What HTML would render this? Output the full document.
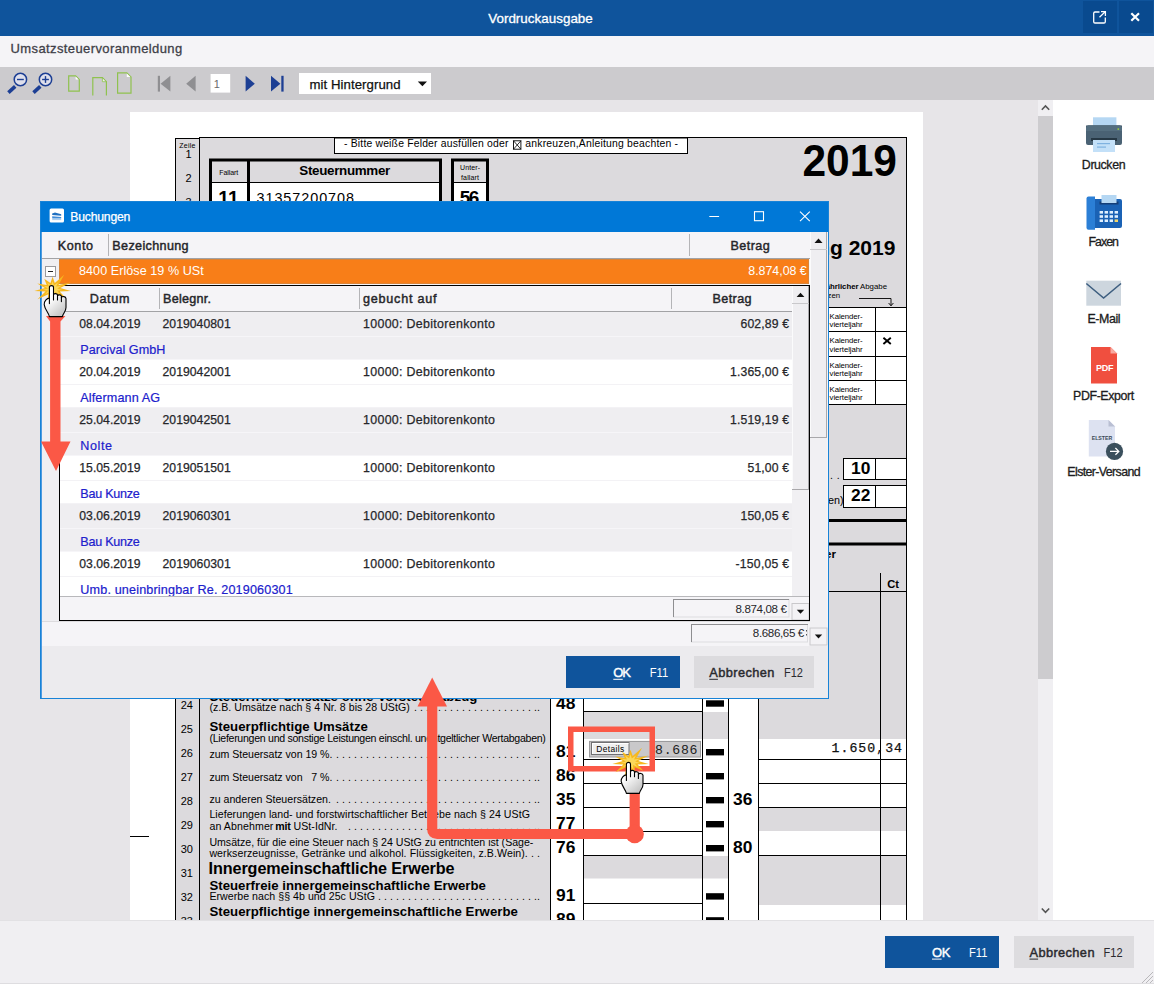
<!DOCTYPE html>
<html lang="de"><head><meta charset="utf-8"><title>Vordruckausgabe</title>
<style>
html,body{margin:0;padding:0;background:#e7e5e8;}
body{width:1154px;height:984px;overflow:hidden;}
svg{display:block;font-family:"Liberation Sans",sans-serif;}
svg text{white-space:pre;}
.mono{font-family:"Liberation Mono",monospace;}
</style></head><body>
<svg width="1154" height="984" viewBox="0 0 1154 984">
<rect x="0" y="0" width="1154" height="984" fill="#e7e5e8"/>
<rect x="0" y="0" width="1154" height="36" fill="#0f549c"/>
<rect x="1083" y="1" width="34" height="32" fill="#094a8f"/>
<rect x="1119" y="1" width="34" height="32" fill="#094a8f"/>
<text x="540.5" y="23" font-size="13.4" fill="#fff" text-anchor="middle" textLength="104.6" stroke="#fff" stroke-width="0.3">Vordruckausgabe</text>
<path d="M1099.5 12 H1095 Q1093.7 12 1093.7 13.3 V21.7 Q1093.7 23 1095 23 H1104 Q1105.3 23 1105.3 21.7 V17.5" fill="none" stroke="#fff" stroke-width="1.3"/>
<path d="M1099.5 17.3 L1105.3 11.6 M1101 11.6 H1105.4 V16" fill="none" stroke="#fff" stroke-width="1.3"/>
<path d="M1131.3 13.3 L1139 20.7 M1139 13.3 L1131.3 20.7" fill="none" stroke="#fff" stroke-width="2.2"/>
<rect x="0" y="36" width="1154" height="31" fill="#f5f4f7"/>
<text x="10.5" y="53.3" font-size="13" fill="#3f3f48" textLength="171.7" stroke="#3f3f48" stroke-width="0.3">Umsatzsteuervoranmeldung</text>
<rect x="0" y="67" width="1154" height="33" fill="#cccbce"/>
<circle cx="20.4" cy="79.5" r="6.2" fill="#dfe0ec" stroke="#1d3f94" stroke-width="1.5"/>
<line x1="15.2" y1="86.4" x2="8.4" y2="92.6" stroke="#1d3f94" stroke-width="3.6"/>
<line x1="17" y1="79.5" x2="23.8" y2="79.5" stroke="#1d3f94" stroke-width="1.4"/>
<circle cx="45.5" cy="79.5" r="6.2" fill="#dfe0ec" stroke="#1d3f94" stroke-width="1.5"/>
<line x1="40.3" y1="86.4" x2="33.5" y2="92.6" stroke="#1d3f94" stroke-width="3.6"/>
<line x1="42.1" y1="79.5" x2="48.9" y2="79.5" stroke="#1d3f94" stroke-width="1.4"/>
<line x1="45.5" y1="76.1" x2="45.5" y2="82.9" stroke="#1d3f94" stroke-width="1.4"/>
<path d="M68.7 75.8 H75.6 L79.3 79.5 V91.2 H68.7 Z" fill="none" stroke="#8fc24f" stroke-width="1.2"/>
<polygon points="75.6,76.4 75.6,79.5 78.7,79.5" fill="#fff"/>
<path d="M92.8 95.5 V77.7 H102.4 L106.4 81.7 V95.5" fill="none" stroke="#8fc24f" stroke-width="1.2"/>
<polygon points="102.4,78.3 102.4,81.7 105.8,81.7" fill="#eef5e4"/>
<path d="M102.4 77.7 V81.7 H106.4" fill="none" stroke="#8fc24f" stroke-width="0.8"/>
<path d="M117.6 72.8 H126.8 L131 77 V93.2 H117.6 Z" fill="none" stroke="#8fc24f" stroke-width="1.2"/>
<polygon points="126.8,73.4 126.8,77 130.4,77" fill="#fff"/>
<rect x="157.8" y="75.8" width="2.2" height="15.8" fill="#8f8f92"/>
<polygon points="170.4,75.8 170.4,91.6 160.6,83.7" fill="#8f8f92"/>
<polygon points="195.6,75.8 195.6,91.6 186.2,83.7" fill="#8f8f92"/>
<rect x="210.6" y="74" width="19.6" height="18.6" fill="#fff"/>
<text x="213.8" y="87.6" font-size="11" fill="#6a6a6a">1</text>
<polygon points="245.6,75.8 245.6,91.6 254.8,83.7" fill="#1d3f94"/>
<polygon points="271,75.8 271,91.6 280.4,83.7" fill="#1d3f94"/>
<rect x="281.3" y="75.8" width="2.3" height="15.8" fill="#1d3f94"/>
<rect x="299" y="73" width="132" height="21" fill="#fff"/>
<text x="309.4" y="88.9" font-size="13.2" fill="#111" textLength="91.2" stroke="#111" stroke-width="0.25">mit Hintergrund</text>
<polygon points="417.8,81.4 427,81.4 422.4,86.2" fill="#111"/>
<rect x="1053" y="100" width="101" height="820" fill="#fff"/>
<rect x="1038" y="100" width="15" height="820" fill="#f0eff2"/>
<rect x="1038" y="116" width="15" height="563" fill="#cdcccf"/>
<path d="M1041.8 109.8 L1045.5 106 L1049.2 109.8" fill="none" stroke="#555" stroke-width="1.6"/>
<path d="M1041.8 908.5 L1045.5 912.3 L1049.2 908.5" fill="none" stroke="#555" stroke-width="1.6"/>
<rect x="1093" y="117.3" width="23.4" height="10" fill="#b5d7f3"/>
<path d="M1088.5 125.5 H1119.5 Q1122 125.5 1122 128 V143 Q1122 145 1120 145 H1088 Q1086 145 1086 143 V128 Q1086 125.5 1088.5 125.5 Z" fill="#4a6274"/>
<rect x="1086" y="125.5" width="36" height="5.5" fill="#3f5566"/>
<path d="M1088.5 125.5 H1119.5 Q1122 125.5 1122 128 V131 H1086 V128 Q1086 125.5 1088.5 125.5 Z" fill="#546e7f"/>
<rect x="1091" y="138" width="26" height="3" fill="#263845"/>
<rect x="1093" y="140" width="22" height="12" fill="#c3e0f8"/>
<rect x="1097" y="143" width="13" height="1.2" fill="#7fb2e0"/>
<rect x="1097" y="146.5" width="9" height="1.2" fill="#7fb2e0"/>
<rect x="1117.5" y="128.3" width="1.6" height="1.6" fill="#9ccc3c"/>
<text x="1103.7" y="168.7" font-size="12.4" fill="#1c1c20" text-anchor="middle" textLength="43.7" stroke="#1c1c20" stroke-width="0.3">Drucken</text>
<path d="M1088.5 196.5 H1095 V229.7 H1088.5 Q1086.5 229.7 1086.5 227.7 V198.5 Q1086.5 196.5 1088.5 196.5 Z" fill="#2b7fd6"/>
<rect x="1101.5" y="195" width="15" height="8" fill="#b5d7f3"/>
<path d="M1095 199 H1120 Q1122 199 1122 201 V226 Q1122 228 1120 228 H1095 Z" fill="#1a62b5"/>
<rect x="1099.5" y="201.5" width="19" height="3" fill="#143e78"/>
<rect x="1101.5" y="199" width="15" height="4" fill="#b5d7f3"/>
<rect x="1099.6" y="211" width="3.4" height="2.6" fill="#dff0ff"/>
<rect x="1104.6" y="211" width="3.4" height="2.6" fill="#dff0ff"/>
<rect x="1109.6" y="211" width="3.4" height="2.6" fill="#dff0ff"/>
<rect x="1114.6" y="211" width="3.4" height="2.6" fill="#dff0ff"/>
<rect x="1099.6" y="215.2" width="3.4" height="2.6" fill="#dff0ff"/>
<rect x="1104.6" y="215.2" width="3.4" height="2.6" fill="#dff0ff"/>
<rect x="1109.6" y="215.2" width="3.4" height="2.6" fill="#dff0ff"/>
<rect x="1114.6" y="215.2" width="3.4" height="2.6" fill="#dff0ff"/>
<rect x="1099.6" y="219.4" width="3.4" height="2.6" fill="#dff0ff"/>
<rect x="1104.6" y="219.4" width="3.4" height="2.6" fill="#dff0ff"/>
<rect x="1109.6" y="219.4" width="3.4" height="2.6" fill="#dff0ff"/>
<rect x="1114.6" y="219.4" width="3.4" height="2.6" fill="#f5d76a"/>
<text x="1103.7" y="246" font-size="12.4" fill="#1c1c20" text-anchor="middle" textLength="30.5" stroke="#1c1c20" stroke-width="0.3">Faxen</text>
<rect x="1086.3" y="280.7" width="34.7" height="25" fill="#cdd6de"/>
<path d="M1086.3 283.5 L1103.6 298 L1121 283.5" fill="none" stroke="#3e5f80" stroke-width="1.6"/>
<text x="1104" y="323" font-size="12.4" fill="#1c1c20" text-anchor="middle" textLength="33" stroke="#1c1c20" stroke-width="0.3">E-Mail</text>
<path d="M1091 347 H1110.5 L1117 353.5 V383.5 H1091 Z" fill="#f04f3f"/>
<path d="M1110.5 347 L1117 353.5 H1110.5 Z" fill="#f9aaa0"/>
<text x="1104.7" y="370.6" font-size="9" fill="#fff" font-weight="bold" text-anchor="middle" textLength="17.4">PDF</text>
<text x="1103.6" y="399.6" font-size="12.4" fill="#1c1c20" text-anchor="middle" textLength="61" stroke="#1c1c20" stroke-width="0.3">PDF-Export</text>
<path d="M1088.8 420 H1108.5 L1115 426.5 V456.5 H1088.8 Z" fill="#dde2f1"/>
<path d="M1108.5 420 L1115 426.5 H1108.5 Z" fill="#b9bfd3"/>
<text x="1102" y="440.2" font-size="6" fill="#3a4b58" font-weight="bold" text-anchor="middle" textLength="20.6" lengthAdjust="spacingAndGlyphs">ELSTER</text>
<circle cx="1114.5" cy="451.4" r="8.6" fill="#3b505d"/>
<path d="M1110 451.4 H1118.6 M1115.4 448 L1118.8 451.4 L1115.4 454.8" fill="none" stroke="#fff" stroke-width="1.3"/>
<text x="1104" y="476" font-size="12.4" fill="#1c1c20" text-anchor="middle" textLength="73.3" stroke="#1c1c20" stroke-width="0.3">Elster-Versand</text>
<rect x="130" y="112" width="793" height="808" fill="#fff"/>
<rect x="175" y="138" width="732" height="782" fill="#dcdadd"/>
<rect x="130" y="836" width="19" height="1" fill="#000"/>
<rect x="175" y="138" width="25" height="1" fill="#000"/>
<rect x="199" y="137" width="708" height="1" fill="#000"/>
<rect x="175" y="138" width="1" height="782" fill="#000"/>
<rect x="199" y="137" width="1" height="783" fill="#000"/>
<rect x="906" y="137" width="1" height="783" fill="#000"/>
<text x="187.3" y="147.6" font-size="7" fill="#000" text-anchor="middle" textLength="16">Zeile</text>
<text x="188.5" y="158.4" font-size="11" fill="#000" text-anchor="middle">1</text>
<text x="188.5" y="182.2" font-size="11" fill="#000" text-anchor="middle">2</text>
<text x="188.5" y="206.2" font-size="11" fill="#000" text-anchor="middle">3</text>
<rect x="334.5" y="138" width="353" height="15.5" fill="#fff" stroke="#000" stroke-width="1"/>
<text x="344" y="147.3" font-size="10.4" fill="#000" textLength="164.4">- Bitte weiße Felder ausfüllen oder</text>
<rect x="513.5" y="140.8" width="7.4" height="8.4" fill="#fff" stroke="#000" stroke-width="0.9"/>
<path d="M513.5 140.8 L520.9 149.2 M520.9 140.8 L513.5 149.2" fill="none" stroke="#000" stroke-width="0.8"/>
<text x="525.3" y="147.3" font-size="10.4" fill="#000" textLength="152.7">ankreuzen,Anleitung beachten -</text>
<rect x="210.5" y="160" width="230" height="60" fill="#fff"/>
<rect x="210.5" y="160" width="230" height="22.5" fill="#dcdadd"/>
<rect x="210.5" y="160" width="230" height="60" fill="none" stroke="#000" stroke-width="3"/>
<rect x="247" y="160" width="3" height="60" fill="#000"/>
<rect x="210" y="182" width="231" height="1" fill="#000"/>
<text x="228.8" y="175" font-size="7" fill="#000" text-anchor="middle" textLength="19">Fallart</text>
<text x="344.8" y="175.4" font-size="13.4" fill="#000" font-weight="bold" text-anchor="middle" textLength="91">Steuernummer</text>
<text x="218.2" y="204.5" font-size="19.4" fill="#000" font-weight="bold">11</text>
<text x="256.5" y="203.2" font-size="14.4" fill="#000" textLength="97.5">31357200708</text>
<rect x="452.5" y="160" width="35" height="60" fill="#fff"/>
<rect x="452.5" y="160" width="35" height="22.5" fill="#dcdadd"/>
<rect x="452.5" y="160" width="35" height="60" fill="none" stroke="#000" stroke-width="3"/>
<rect x="452" y="182" width="36" height="1" fill="#000"/>
<text x="470" y="170.3" font-size="7" fill="#000" text-anchor="middle" textLength="20">Unter-</text>
<text x="470" y="180.3" font-size="7" fill="#000" text-anchor="middle" textLength="18">fallart</text>
<text x="469.6" y="203.5" font-size="19" fill="#000" font-weight="bold" text-anchor="middle" textLength="19.5">56</text>
<text x="802.4" y="176.2" font-size="44.5" fill="#000" font-weight="bold" textLength="94.6" lengthAdjust="spacingAndGlyphs">2019</text>
<text x="895.4" y="255" font-size="21" fill="#000" font-weight="bold" text-anchor="end">Umsatzsteuer-Voranmeldung 2019</text>
<text x="858.6" y="289" font-size="7.8" fill="#000" font-weight="bold" text-anchor="end">bei vierteljährlicher</text>
<text x="860" y="289" font-size="7.8" fill="#000" textLength="27">Abgabe</text>
<text x="840.2" y="298" font-size="7.8" fill="#000" text-anchor="end">bitte ankreuzen</text>
<path d="M859 298.5 H891 V305.6 M888.6 303 L891 305.8 L893.4 303" fill="none" stroke="#000" stroke-width="0.9"/>
<rect x="780" y="307.5" width="126" height="97" fill="#fff"/>
<rect x="780" y="307" width="126" height="1" fill="#000"/>
<rect x="780" y="331" width="126" height="1" fill="#000"/>
<rect x="780" y="356" width="126" height="1" fill="#000"/>
<rect x="780" y="380" width="126" height="1" fill="#000"/>
<rect x="780" y="404" width="126" height="1" fill="#000"/>
<rect x="875" y="307" width="1" height="98" fill="#000"/>
<text x="829.6" y="319.1" font-size="7.8" fill="#000" textLength="33">Kalender-</text>
<text x="829.6" y="327.4" font-size="7.8" fill="#000" textLength="33">vierteljahr</text>
<text x="829.6" y="343.3" font-size="7.8" fill="#000" textLength="33">Kalender-</text>
<text x="829.6" y="351.6" font-size="7.8" fill="#000" textLength="33">vierteljahr</text>
<text x="829.6" y="367.8" font-size="7.8" fill="#000" textLength="33">Kalender-</text>
<text x="829.6" y="376.1" font-size="7.8" fill="#000" textLength="33">vierteljahr</text>
<text x="829.6" y="392" font-size="7.8" fill="#000" textLength="33">Kalender-</text>
<text x="829.6" y="400.3" font-size="7.8" fill="#000" textLength="33">vierteljahr</text>
<path d="M883.4 337.8 L890.8 344 M890.8 337.8 L883.4 344" fill="none" stroke="#000" stroke-width="1.9"/>
<rect x="843.5" y="458.5" width="63" height="21" fill="#fff" stroke="#000" stroke-width="1"/>
<rect x="875" y="458" width="1" height="22" fill="#000"/>
<text x="860.7" y="474.4" font-size="17.4" fill="#000" font-weight="bold" text-anchor="middle" textLength="19.6">10</text>
<text x="830" y="478.8" font-size="10.5" fill="#000" textLength="9.6">. .</text>
<rect x="843.5" y="485.5" width="63" height="22" fill="#fff" stroke="#000" stroke-width="1"/>
<rect x="875" y="485" width="1" height="23" fill="#000"/>
<text x="860.7" y="501.2" font-size="17.4" fill="#000" font-weight="bold" text-anchor="middle" textLength="19.6">22</text>
<text x="843.6" y="504.4" font-size="10.8" fill="#000" text-anchor="end">(falls vorhanden)</text>
<rect x="200" y="519" width="706" height="3" fill="#000"/>
<rect x="200" y="542.5" width="706" height="3" fill="#000"/>
<text x="836" y="558" font-size="11.5" fill="#000" font-weight="bold" text-anchor="end">Steuer</text>
<text x="887.2" y="588.3" font-size="11.2" fill="#000" font-weight="bold" textLength="11.8">Ct</text>
<rect x="880" y="573" width="1" height="347" fill="#000"/>
<rect x="551" y="591" width="355" height="1" fill="#000"/>
<rect x="551" y="592" width="207" height="328" fill="#fff"/>
<rect x="759" y="592" width="147" height="328" fill="#dcdadd"/>
<rect x="584" y="712" width="144" height="27" fill="#dcdadd"/>
<rect x="584" y="856" width="144" height="22.5" fill="#dcdadd"/>
<rect x="759" y="739" width="147" height="69" fill="#fff"/>
<rect x="759" y="831" width="147" height="25" fill="#fff"/>
<rect x="759" y="905" width="147" height="15" fill="#fff"/>
<rect x="550" y="592" width="1" height="328" fill="#000"/>
<rect x="583" y="592" width="1" height="328" fill="#000"/>
<rect x="702" y="592" width="1" height="328" fill="#000"/>
<rect x="728" y="592" width="1" height="328" fill="#000"/>
<rect x="758" y="592" width="1" height="328" fill="#000"/>
<rect x="880" y="573" width="1" height="347" fill="#000"/>
<rect x="584" y="711" width="118" height="1" fill="#000"/>
<rect x="584" y="759" width="118" height="1" fill="#000"/>
<rect x="584" y="783" width="118" height="1" fill="#000"/>
<rect x="584" y="807" width="118" height="1" fill="#000"/>
<rect x="584" y="831" width="118" height="1" fill="#000"/>
<rect x="584" y="855" width="118" height="1" fill="#000"/>
<rect x="584" y="903" width="118" height="1" fill="#000"/>
<rect x="584" y="711" width="118" height="1" fill="#000"/>
<rect x="759" y="759" width="147" height="1" fill="#000"/>
<rect x="759" y="783" width="147" height="1" fill="#000"/>
<rect x="759" y="807" width="147" height="1" fill="#000"/>
<rect x="759" y="855" width="147" height="1" fill="#000"/>
<rect x="706" y="700.3" width="18" height="6.4" fill="#000"/>
<rect x="706" y="749" width="18" height="6.4" fill="#000"/>
<rect x="706" y="773" width="18" height="6.4" fill="#000"/>
<rect x="706" y="797" width="18" height="6.4" fill="#000"/>
<rect x="706" y="821" width="18" height="6.4" fill="#000"/>
<rect x="706" y="845" width="18" height="6.4" fill="#000"/>
<rect x="706" y="893.2" width="18" height="6.4" fill="#000"/>
<rect x="706" y="917.2" width="18" height="6.4" fill="#000"/>
<text x="556" y="708.9" font-size="17.4" fill="#000" font-weight="bold" textLength="19.4">48</text>
<text x="556" y="756.9" font-size="17.4" fill="#000" font-weight="bold" textLength="19.4">81</text>
<text x="556" y="780.9" font-size="17.4" fill="#000" font-weight="bold" textLength="19.4">86</text>
<text x="556" y="804.8" font-size="17.4" fill="#000" font-weight="bold" textLength="19.4">35</text>
<text x="556" y="828.9" font-size="17.4" fill="#000" font-weight="bold" textLength="19.4">77</text>
<text x="556" y="852.9" font-size="17.4" fill="#000" font-weight="bold" textLength="19.4">76</text>
<text x="556" y="901.2" font-size="17.4" fill="#000" font-weight="bold" textLength="19.4">91</text>
<text x="556" y="925.2" font-size="17.4" fill="#000" font-weight="bold" textLength="19.4">89</text>
<text x="733" y="804.6" font-size="17.4" fill="#000" font-weight="bold" textLength="19.4">36</text>
<text x="733" y="852.6" font-size="17.4" fill="#000" font-weight="bold" textLength="19.4">80</text>
<text x="186.8" y="709.3" font-size="11" fill="#000" text-anchor="middle" textLength="12.2">24</text>
<text x="186.8" y="733.3" font-size="11" fill="#000" text-anchor="middle" textLength="12.2">25</text>
<text x="186.8" y="757.3" font-size="11" fill="#000" text-anchor="middle" textLength="12.2">26</text>
<text x="186.8" y="781.3" font-size="11" fill="#000" text-anchor="middle" textLength="12.2">27</text>
<text x="186.8" y="805.3" font-size="11" fill="#000" text-anchor="middle" textLength="12.2">28</text>
<text x="186.8" y="828.7" font-size="11" fill="#000" text-anchor="middle" textLength="12.2">29</text>
<text x="186.8" y="852.7" font-size="11" fill="#000" text-anchor="middle" textLength="12.2">30</text>
<text x="186.8" y="876.7" font-size="11" fill="#000" text-anchor="middle" textLength="12.2">31</text>
<text x="186.8" y="900.7" font-size="11" fill="#000" text-anchor="middle" textLength="12.2">32</text>
<text x="186.8" y="924.7" font-size="11" fill="#000" text-anchor="middle" textLength="12.2">33</text>
<text x="209.4" y="700.6" font-size="13.2" fill="#000" font-weight="bold" textLength="268">Steuerfreie Umsätze ohne Vorsteuerabzug</text>
<text x="209.4" y="711.3" font-size="10.6" fill="#000" textLength="200.3">(z.B. Umsätze nach § 4 Nr. 8 bis 28 UStG)</text>
<text x="413.95" y="711.3" font-size="10.6" fill="#000" textLength="122.95">. . . . . . . . . . . . . . . . . . . . .</text>
<text x="537.05" y="711.3" font-size="10.6" fill="#000">.</text>
<text x="209.4" y="731" font-size="13.2" fill="#000" font-weight="bold" textLength="158.5">Steuerpflichtige Umsätze</text>
<text x="209.4" y="741.6" font-size="10.6" fill="#000" textLength="336.5">(Lieferungen und sonstige Leistungen einschl. unentgeltlicher Wertabgaben)</text>
<text x="209.4" y="757.6" font-size="10.6" fill="#000" textLength="123">zum Steuersatz von 19 %.</text>
<text x="335.95" y="757.6" font-size="10.6" fill="#000" textLength="200.95">. . . . . . . . . . . . . . . . . . . . . . . . . . . . . . . . . .</text>
<text x="537.05" y="757.6" font-size="10.6" fill="#000">.</text>
<text x="209.4" y="781" font-size="10.6" fill="#000" textLength="123">zum Steuersatz von   7 %.</text>
<text x="335.95" y="781" font-size="10.6" fill="#000" textLength="200.95">. . . . . . . . . . . . . . . . . . . . . . . . . . . . . . . . . .</text>
<text x="537.05" y="781" font-size="10.6" fill="#000">.</text>
<text x="209.4" y="803.2" font-size="10.6" fill="#000" textLength="121.5">zu anderen Steuersätzen.</text>
<text x="335.95" y="803.2" font-size="10.6" fill="#000" textLength="200.95">. . . . . . . . . . . . . . . . . . . . . . . . . . . . . . . . . .</text>
<text x="537.05" y="803.2" font-size="10.6" fill="#000">.</text>
<text x="209.4" y="818.2" font-size="10.6" fill="#000" textLength="320.5">Lieferungen land- und forstwirtschaftlicher Betriebe nach § 24 UStG</text>
<text x="209.4" y="830" font-size="10.6" fill="#000" textLength="64">an Abnehmer</text>
<text x="275.3" y="830" font-size="10.6" fill="#000" font-weight="bold" textLength="15.5">mit</text>
<text x="293.5" y="830" font-size="10.6" fill="#000" textLength="44">USt-IdNr.</text>
<text x="347.95" y="830" font-size="10.6" fill="#000" textLength="188.95">. . . . . . . . . . . . . . . . . . . . . . . . . . . . . . . .</text>
<text x="537.05" y="830" font-size="10.6" fill="#000">.</text>
<text x="209.4" y="845.6" font-size="10.6" fill="#000" textLength="324">Umsätze, für die eine Steuer nach § 24 UStG zu entrichten ist (Säge-</text>
<text x="209.4" y="856.6" font-size="10.6" fill="#000" textLength="330.5">werkserzeugnisse, Getränke und alkohol. Flüssigkeiten, z.B.Wein). . .</text>
<text x="208.6" y="874.4" font-size="16.2" fill="#000" font-weight="bold" textLength="246">Innergemeinschaftliche Erwerbe</text>
<text x="209.4" y="889.6" font-size="13.2" fill="#000" font-weight="bold" textLength="276.5">Steuerfreie innergemeinschaftliche Erwerbe</text>
<text x="209.4" y="900.4" font-size="10.6" fill="#000" textLength="165.5">Erwerbe nach §§ 4b und 25c UStG</text>
<text x="377.95" y="900.4" font-size="10.6" fill="#000" textLength="158.95">. . . . . . . . . . . . . . . . . . . . . . . . . . .</text>
<text x="537.05" y="900.4" font-size="10.6" fill="#000">.</text>
<text x="209.4" y="916.4" font-size="13.2" fill="#000" font-weight="bold" textLength="308.5">Steuerpflichtige innergemeinschaftliche Erwerbe</text>
<rect x="589" y="740" width="112" height="18" fill="#f4f4f4"/>
<rect x="589.5" y="741.5" width="111" height="15.5" fill="#c9c8ca" stroke="#9b9b9d" stroke-width="1"/>
<rect x="591.5" y="742.5" width="37.5" height="12" fill="#efefef" stroke="#707072" stroke-width="1"/>
<rect x="592" y="743" width="36.5" height="1" fill="#fff"/>
<rect x="592" y="743" width="1" height="11" fill="#fff"/>
<text x="610.3" y="751.8" font-size="8.4" fill="#000" text-anchor="middle" textLength="28">Details</text>
<text x="655" y="754" font-size="13.2" fill="#222" textLength="42.5" font-family="Liberation Mono, monospace">8.686</text>
<text x="831.5" y="752" font-size="13.2" fill="#111" textLength="70.5" font-family="Liberation Mono, monospace" stroke="#111" stroke-width="0.25">1.650,34</text>
<rect x="0" y="920" width="1154" height="64" fill="#f0eff2"/>
<rect x="0" y="920" width="1154" height="1" fill="#e2e1e4"/>
<rect x="0" y="983" width="1154" height="1" fill="#dedde0"/>
<rect x="885" y="936" width="114" height="32" fill="#0f549c"/>
<rect x="1014" y="936" width="120" height="32" fill="#dddcdf"/>
<text x="932" y="956.8" font-size="13" fill="#fff" textLength="18.3" stroke="#fff" stroke-width="0.4">OK</text>
<rect x="932" y="958.6" width="9.6" height="1" fill="#fff"/>
<text x="969" y="956.8" font-size="12.8" fill="#fff" textLength="18.4" lengthAdjust="spacingAndGlyphs">F11</text>
<text x="1029.5" y="956.8" font-size="12.8" fill="#2a2a2e" textLength="65" stroke="#2a2a2e" stroke-width="0.45">Abbrechen</text>
<rect x="1029.5" y="958.6" width="8.6" height="1" fill="#2a2a2e"/>
<text x="1103.6" y="956.8" font-size="12.8" fill="#2a2a2e" textLength="19" lengthAdjust="spacingAndGlyphs">F12</text>
<line x1="1153" y1="980" x2="1150" y2="983" stroke="#b9b8bb" stroke-width="1"/>
<line x1="1153" y1="976" x2="1146" y2="983" stroke="#b9b8bb" stroke-width="1"/>
<line x1="1153" y1="972" x2="1142" y2="983" stroke="#b9b8bb" stroke-width="1"/>
<rect x="40" y="201" width="789" height="498" fill="#ecebee"/>
<rect x="40" y="201" width="789" height="31" fill="#0078d7"/>
<rect x="49.6" y="208.6" width="14.4" height="14" fill="#fff" rx="1.5"/>
<path d="M52.2 213.4 L55 212.4 L61.2 214.2 V215.8 L52.2 214.9 Z" fill="#1f6fc0"/>
<path d="M52.2 216.3 L61.2 216.9 V218.4 H52.2 Z" fill="#3f8bd8"/>
<rect x="52.2" y="219.2" width="9" height="0.9" fill="#9cc4ec"/>
<text x="70.3" y="221" font-size="12.2" fill="#fff" textLength="60" stroke="#fff" stroke-width="0.25">Buchungen</text>
<rect x="709.3" y="216" width="9.8" height="1" fill="#fff"/>
<rect x="754.5" y="211.7" width="9" height="9" fill="none" stroke="#fff" stroke-width="1.1"/>
<path d="M800 211.6 L809.8 221.2 M809.8 211.6 L800 221.2" fill="none" stroke="#fff" stroke-width="1.1"/>
<rect x="41" y="232" width="787" height="414" fill="#f5f4f7"/>
<rect x="41" y="258" width="769" height="1" fill="#a2a2a5"/>
<rect x="108" y="234" width="1" height="22" fill="#b4b4b7"/>
<rect x="689" y="234" width="1" height="22" fill="#b4b4b7"/>
<text x="57.7" y="250" font-size="12.6" fill="#26262a" textLength="35.3" stroke="#26262a" stroke-width="0.45">Konto</text>
<text x="112.3" y="250" font-size="12.6" fill="#26262a" textLength="76.3" stroke="#26262a" stroke-width="0.45">Bezeichnung</text>
<text x="730.5" y="250" font-size="12.6" fill="#26262a" textLength="39.2" stroke="#26262a" stroke-width="0.45">Betrag</text>
<rect x="810" y="232" width="17" height="395" fill="#f1f0f3"/>
<rect x="810" y="232" width="17" height="206" fill="#efeef1"/>
<rect x="826" y="232" width="1" height="206" fill="#a9a8ab"/>
<rect x="810" y="437" width="17" height="1" fill="#a9a8ab"/>
<rect x="810" y="232" width="1" height="205" fill="#fbfbfc"/>
<rect x="810" y="249" width="17" height="1" fill="#c9c8cb"/>
<polygon points="814.5,243 822.5,243 818.5,238.6" fill="#111"/>
<rect x="810" y="628" width="17" height="17" fill="#f3f2f5" stroke="#c9c8cb" stroke-width="1"/>
<polygon points="814.8,634.6 822.2,634.6 818.5,638.6" fill="#111"/>
<rect x="41" y="259" width="18" height="362" fill="#f0eff2"/>
<rect x="59" y="259" width="750" height="25" fill="#f87e18"/>
<rect x="59.5" y="259.5" width="749" height="24" fill="none" stroke="#b98a5a" stroke-width="1" stroke-dasharray="1 1"/>
<text x="79" y="274.7" font-size="12.6" fill="#fff" textLength="124.8">8400 Erlöse 19 % USt</text>
<text x="806.7" y="274.7" font-size="12.4" fill="#fff" text-anchor="end" textLength="58.4">8.874,08 €</text>
<rect x="45.5" y="266.5" width="10" height="10" fill="#fff" stroke="#9a9a9d" stroke-width="1"/>
<rect x="48" y="271" width="5" height="1" fill="#222"/>
<rect x="60" y="285" width="749" height="336" fill="#f5f4f7"/>
<rect x="59" y="285" width="751" height="1" fill="#000"/>
<rect x="59" y="285" width="1" height="336" fill="#000"/>
<rect x="60" y="311" width="732" height="1" fill="#a2a2a5"/>
<rect x="159" y="288" width="1" height="21" fill="#b4b4b7"/>
<rect x="359" y="288" width="1" height="21" fill="#b4b4b7"/>
<rect x="671" y="288" width="1" height="21" fill="#b4b4b7"/>
<text x="89.7" y="302.6" font-size="12.6" fill="#26262a" textLength="39.7" stroke="#26262a" stroke-width="0.45">Datum</text>
<text x="163" y="302.6" font-size="12.6" fill="#26262a" textLength="48" stroke="#26262a" stroke-width="0.45">Belegnr.</text>
<text x="363" y="302.6" font-size="12.6" fill="#26262a" textLength="73.5" stroke="#26262a" stroke-width="0.45">gebucht auf</text>
<text x="712.4" y="302.6" font-size="12.6" fill="#26262a" textLength="39.2" stroke="#26262a" stroke-width="0.45">Betrag</text>
<clipPath id="rowsclip"><rect x="60" y="312" width="732" height="284"/></clipPath>
<g clip-path="url(#rowsclip)">
<rect x="60" y="312" width="732" height="48" fill="#efeef1"/>
<rect x="60" y="336" width="732" height="1" fill="#f6f5f8"/>
<rect x="60" y="359" width="732" height="1" fill="#f6f5f8"/>
<text x="79.3" y="327.8" font-size="12.2" fill="#26262a" textLength="61.2" stroke="#26262a" stroke-width="0.25">08.04.2019</text>
<text x="162.5" y="327.8" font-size="12.2" fill="#26262a" textLength="68.2" stroke="#26262a" stroke-width="0.25">2019040801</text>
<text x="363" y="327.8" font-size="12.4" fill="#26262a" textLength="131.8" stroke="#26262a" stroke-width="0.25">10000: Debitorenkonto</text>
<text x="789" y="327.8" font-size="12.2" fill="#26262a" text-anchor="end" textLength="48.5" stroke="#26262a" stroke-width="0.25">602,89 €</text>
<text x="80.3" y="353.8" font-size="12.6" fill="#2020cc" textLength="85" stroke="#2020cc" stroke-width="0.2">Parcival GmbH</text>
<rect x="60" y="360" width="732" height="48" fill="#fff"/>
<rect x="60" y="384" width="732" height="1" fill="#f3f2f5"/>
<rect x="60" y="407" width="732" height="1" fill="#f3f2f5"/>
<text x="79.3" y="375.8" font-size="12.2" fill="#26262a" textLength="61.2" stroke="#26262a" stroke-width="0.25">20.04.2019</text>
<text x="162.5" y="375.8" font-size="12.2" fill="#26262a" textLength="68.2" stroke="#26262a" stroke-width="0.25">2019042001</text>
<text x="363" y="375.8" font-size="12.4" fill="#26262a" textLength="131.8" stroke="#26262a" stroke-width="0.25">10000: Debitorenkonto</text>
<text x="789" y="375.8" font-size="12.2" fill="#26262a" text-anchor="end" textLength="59" stroke="#26262a" stroke-width="0.25">1.365,00 €</text>
<text x="80.3" y="401.8" font-size="12.6" fill="#2020cc" textLength="79.7" stroke="#2020cc" stroke-width="0.2">Alfermann AG</text>
<rect x="60" y="408" width="732" height="48" fill="#efeef1"/>
<rect x="60" y="432" width="732" height="1" fill="#f6f5f8"/>
<rect x="60" y="455" width="732" height="1" fill="#f6f5f8"/>
<text x="79.3" y="423.8" font-size="12.2" fill="#26262a" textLength="61.2" stroke="#26262a" stroke-width="0.25">25.04.2019</text>
<text x="162.5" y="423.8" font-size="12.2" fill="#26262a" textLength="68.2" stroke="#26262a" stroke-width="0.25">2019042501</text>
<text x="363" y="423.8" font-size="12.4" fill="#26262a" textLength="131.8" stroke="#26262a" stroke-width="0.25">10000: Debitorenkonto</text>
<text x="789" y="423.8" font-size="12.2" fill="#26262a" text-anchor="end" textLength="59" stroke="#26262a" stroke-width="0.25">1.519,19 €</text>
<text x="80.3" y="449.8" font-size="12.6" fill="#2020cc" textLength="31.8" stroke="#2020cc" stroke-width="0.2">Nolte</text>
<rect x="60" y="456" width="732" height="48" fill="#fff"/>
<rect x="60" y="480" width="732" height="1" fill="#f3f2f5"/>
<rect x="60" y="503" width="732" height="1" fill="#f3f2f5"/>
<text x="79.3" y="471.8" font-size="12.2" fill="#26262a" textLength="61.2" stroke="#26262a" stroke-width="0.25">15.05.2019</text>
<text x="162.5" y="471.8" font-size="12.2" fill="#26262a" textLength="68.2" stroke="#26262a" stroke-width="0.25">2019051501</text>
<text x="363" y="471.8" font-size="12.4" fill="#26262a" textLength="131.8" stroke="#26262a" stroke-width="0.25">10000: Debitorenkonto</text>
<text x="789" y="471.8" font-size="12.2" fill="#26262a" text-anchor="end" textLength="41.5" stroke="#26262a" stroke-width="0.25">51,00 €</text>
<text x="80.3" y="497.8" font-size="12.6" fill="#2020cc" textLength="59.5" stroke="#2020cc" stroke-width="0.2">Bau Kunze</text>
<rect x="60" y="504" width="732" height="48" fill="#efeef1"/>
<rect x="60" y="528" width="732" height="1" fill="#f6f5f8"/>
<rect x="60" y="551" width="732" height="1" fill="#f6f5f8"/>
<text x="79.3" y="519.8" font-size="12.2" fill="#26262a" textLength="61.2" stroke="#26262a" stroke-width="0.25">03.06.2019</text>
<text x="162.5" y="519.8" font-size="12.2" fill="#26262a" textLength="68.2" stroke="#26262a" stroke-width="0.25">2019060301</text>
<text x="363" y="519.8" font-size="12.4" fill="#26262a" textLength="131.8" stroke="#26262a" stroke-width="0.25">10000: Debitorenkonto</text>
<text x="789" y="519.8" font-size="12.2" fill="#26262a" text-anchor="end" textLength="48.5" stroke="#26262a" stroke-width="0.25">150,05 €</text>
<text x="80.3" y="545.8" font-size="12.6" fill="#2020cc" textLength="59.5" stroke="#2020cc" stroke-width="0.2">Bau Kunze</text>
<rect x="60" y="552" width="732" height="48" fill="#fff"/>
<rect x="60" y="576" width="732" height="1" fill="#f3f2f5"/>
<rect x="60" y="599" width="732" height="1" fill="#f3f2f5"/>
<text x="79.3" y="567.8" font-size="12.2" fill="#26262a" textLength="61.2" stroke="#26262a" stroke-width="0.25">03.06.2019</text>
<text x="162.5" y="567.8" font-size="12.2" fill="#26262a" textLength="68.2" stroke="#26262a" stroke-width="0.25">2019060301</text>
<text x="363" y="567.8" font-size="12.4" fill="#26262a" textLength="131.8" stroke="#26262a" stroke-width="0.25">10000: Debitorenkonto</text>
<text x="789" y="567.8" font-size="12.2" fill="#26262a" text-anchor="end" textLength="53.5" stroke="#26262a" stroke-width="0.25">-150,05 €</text>
<text x="80.3" y="593.8" font-size="12.6" fill="#2020cc" textLength="212.5" stroke="#2020cc" stroke-width="0.2">Umb. uneinbringbar Re. 2019060301</text>
</g>
<rect x="792" y="286" width="17" height="310" fill="#f1f0f3"/>
<rect x="792" y="286" width="17" height="204" fill="#efeef1"/>
<rect x="808" y="286" width="1" height="204" fill="#a9a8ab"/>
<rect x="792" y="489" width="17" height="1" fill="#a9a8ab"/>
<rect x="792" y="286" width="1" height="203" fill="#fbfbfc"/>
<rect x="792" y="303" width="17" height="1" fill="#c9c8cb"/>
<polygon points="796.6,297 804.4,297 800.5,292.8" fill="#111"/>
<rect x="60" y="596" width="749" height="1" fill="#b8b8bb"/>
<rect x="60" y="597" width="749" height="23" fill="#f5f4f7"/>
<rect x="673.5" y="599.5" width="115.5" height="17.5" fill="#f5f4f7" stroke="#dddde0" stroke-width="1"/>
<rect x="673" y="599" width="116" height="1" fill="#8e8e91"/>
<rect x="673" y="599" width="1" height="18" fill="#8e8e91"/>
<text x="787" y="612.6" font-size="11.6" fill="#26262a" text-anchor="end" textLength="51.5">8.874,08 €</text>
<rect x="792" y="603.5" width="17" height="16.5" fill="#f3f2f5" stroke="#c9c8cb" stroke-width="1"/>
<polygon points="796.8,609.8 804.2,609.8 800.5,613.8" fill="#111"/>
<rect x="59" y="620" width="751" height="1" fill="#000"/>
<rect x="809" y="285" width="1" height="336" fill="#000"/>
<rect x="41" y="621" width="769" height="1" fill="#dcdbde"/>
<rect x="691.5" y="624.5" width="116" height="17.5" fill="#f5f4f7" stroke="#dddde0" stroke-width="1"/>
<rect x="691" y="624" width="117" height="1" fill="#8e8e91"/>
<rect x="691" y="624" width="1" height="18" fill="#8e8e91"/>
<text x="804.3" y="637.3" font-size="11.6" fill="#26262a" text-anchor="end" textLength="51.5">8.686,65 €</text>
<rect x="806" y="630" width="1" height="1.5" fill="#555"/>
<rect x="806" y="634" width="1" height="1.5" fill="#555"/>
<rect x="41" y="646" width="787" height="52" fill="#ecebee"/>
<rect x="566" y="656" width="114" height="32" fill="#0f549c"/>
<rect x="694" y="656" width="120" height="32" fill="#dcdbde"/>
<text x="613.3" y="677" font-size="13" fill="#fff" textLength="17.6" stroke="#fff" stroke-width="0.4">OK</text>
<rect x="613.3" y="678.8" width="9.4" height="1" fill="#fff"/>
<text x="649.8" y="677" font-size="12.8" fill="#fff" textLength="18.4" lengthAdjust="spacingAndGlyphs">F11</text>
<text x="709.3" y="677" font-size="12.8" fill="#2a2a2e" textLength="65" stroke="#2a2a2e" stroke-width="0.45">Abbrechen</text>
<rect x="709.3" y="678.8" width="8.6" height="1" fill="#2a2a2e"/>
<text x="784" y="677" font-size="12.8" fill="#2a2a2e" textLength="19" lengthAdjust="spacingAndGlyphs">F12</text>
<rect x="40.5" y="201.5" width="788" height="497" fill="none" stroke="#1883d7" stroke-width="1"/>
<rect x="41" y="232" width="1" height="466" fill="#4f9be0"/>
<defs><linearGradient id="hg" x1="0" y1="0" x2="0.6" y2="1"><stop offset="0.45" stop-color="#fff"/><stop offset="1" stop-color="#c9c9c9"/></linearGradient></defs>
<polygon points="46,316 65.4,316 60.5,321.5 60.5,441.5 70.5,441.5 56,471 41,441.5 50.1,441.5 50.1,321.5" fill="#fb5846"/>
<rect x="570.75" y="729.25" width="81.5" height="39.5" fill="none" stroke="#fb5846" stroke-width="5.5"/>
<path d="M634.7 790 V834 H437.2 Q432.2 834 432.2 829 V704" fill="none" stroke="#fb5846" stroke-width="10.2" stroke-linejoin="round"/>
<polygon points="417.5,706.5 447,706.5 432.2,677.5" fill="#fb5846"/>
<circle cx="634.7" cy="834" r="9.2" fill="#fb5846"/>
<polygon points="52.6,276.77 54.8,283.08 64.16,274.76 58.49,284.96 70.7,282.46 60.32,288.12 70.83,291.07 59.7,291.57 65.39,297.78 56.82,294.19 56.95,300.73 52.6,295.18 46.58,305.24 48.38,294.19 37.56,299.32 45.5,291.57 34.37,291.07 44.88,288.12 37.2,283.43 46.71,284.96 44.25,278.71 50.4,283.08" fill="#f6b81f"/>
<polygon points="52.6,281.16 53.92,285.45 57.95,282.41 56.14,286.57 61.61,285.74 57.23,288.47 62.4,290.12 56.86,290.54 60.08,294.13 55.13,292.12 55.39,296.52 52.6,292.7 49.81,296.52 50.07,292.12 45.12,294.13 48.34,290.54 42.8,290.12 47.97,288.47 43.59,285.74 49.06,286.57 47.25,282.41 51.28,285.45" fill="#fbd85a"/>
<g transform="translate(51.4 285.6)">
<path d="M-2 1.8 C-2 -0.6 2.1 -0.6 2.1 1.8 L2.1 9 C2.8 7.6 5.6 7.6 6.1 9.4 L6.1 10.2 C6.8 8.8 9.6 9 10 10.6 L10 11.8 C10.8 10.4 14.4 10.8 14.6 13 L14.6 22 C14.6 26 11.6 27.5 11 31 L-2 31 C-2.6 27.5 -6.6 24 -7.2 19 C-7.5 15.5 -4.5 12.5 -2 12.5 Z" fill="url(#hg)" stroke="#000" stroke-width="1.1" stroke-linejoin="round"/>
<path d="M-2 12.5 V18 M2.1 9 V14.4 M6.1 10.2 V14.4 M10 11.8 V16" fill="none" stroke="#000" stroke-width="1.1" stroke-linecap="round"/>
</g>
<polygon points="630.5,749.77 632.7,756.08 642.06,747.76 636.39,757.96 648.6,755.46 638.22,761.12 648.73,764.07 637.6,764.57 643.29,770.78 634.72,767.19 634.85,773.73 630.5,768.17 624.48,778.24 626.28,767.19 615.46,772.32 623.4,764.57 612.27,764.07 622.78,761.12 615.1,756.43 624.61,757.96 622.15,751.71 628.3,756.08" fill="#f6b81f"/>
<polygon points="630.5,754.16 631.82,758.45 635.85,755.41 634.04,759.57 639.51,758.74 635.13,761.47 640.3,763.12 634.76,763.54 637.98,767.13 633.03,765.12 633.29,769.52 630.5,765.71 627.71,769.52 627.97,765.12 623.02,767.13 626.24,763.54 620.7,763.12 625.87,761.47 621.49,758.74 626.96,759.57 625.15,755.41 629.18,758.45" fill="#fbd85a"/>
<g transform="translate(628.4 762.4)">
<path d="M-2 1.8 C-2 -0.6 2.1 -0.6 2.1 1.8 L2.1 9 C2.8 7.6 5.6 7.6 6.1 9.4 L6.1 10.2 C6.8 8.8 9.6 9 10 10.6 L10 11.8 C10.8 10.4 14.4 10.8 14.6 13 L14.6 22 C14.6 26 11.6 27.5 11 31 L-2 31 C-2.6 27.5 -6.6 24 -7.2 19 C-7.5 15.5 -4.5 12.5 -2 12.5 Z" fill="url(#hg)" stroke="#000" stroke-width="1.1" stroke-linejoin="round"/>
<path d="M-2 12.5 V18 M2.1 9 V14.4 M6.1 10.2 V14.4 M10 11.8 V16" fill="none" stroke="#000" stroke-width="1.1" stroke-linecap="round"/>
</g>
</svg>
</body></html>
